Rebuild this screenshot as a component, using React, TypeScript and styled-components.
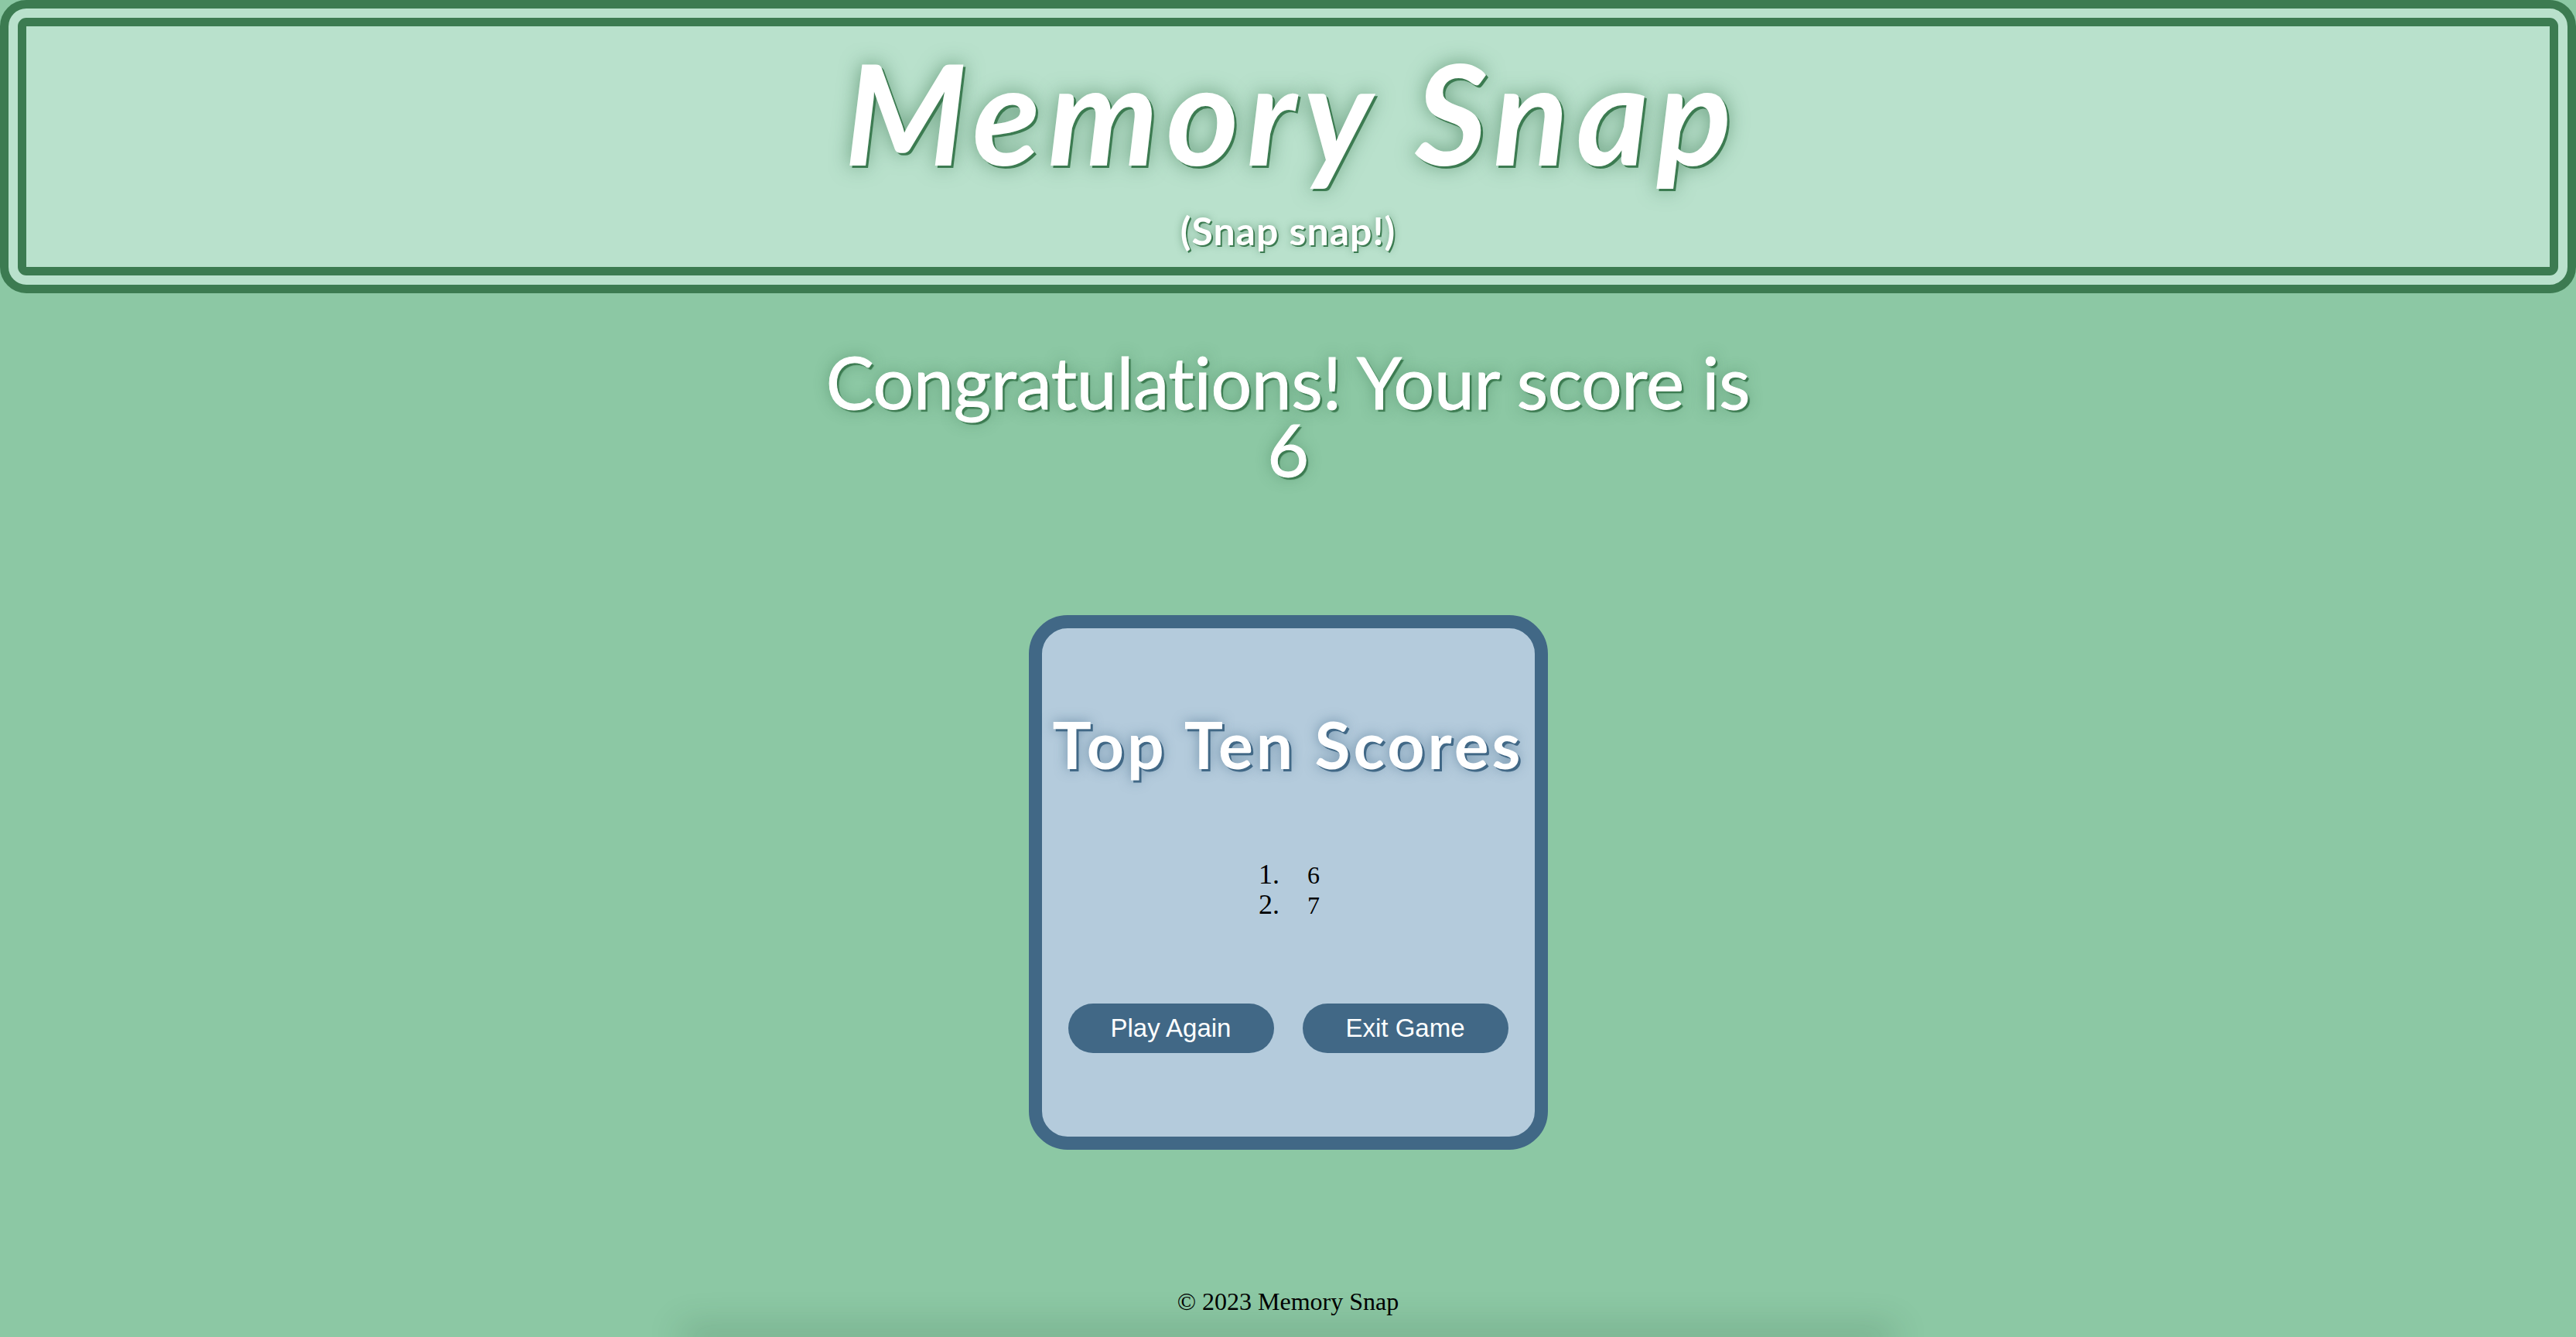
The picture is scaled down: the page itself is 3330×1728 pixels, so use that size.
import React from "react";
import styled, { createGlobalStyle } from "styled-components";

const GlobalStyle = createGlobalStyle`
  html, body {
    margin: 0;
    padding: 0;
    background: #8cc8a4;
  }
  body {
    font-family: "Liberation Serif", "Times New Roman", serif;
  }
  * { box-sizing: border-box; }
`;

const Page = styled.div`
  min-height: 100vh;
  display: flex;
  flex-direction: column;
  align-items: stretch;
  text-align: center;
`;

const Header = styled.header`
  border: 34px double #3c7b51;
  border-radius: 34px;
  background: #b9e1cc;
  padding: 21px 0 22px;
  display: flex;
  flex-direction: column;
  align-items: center;
`;

const Title = styled.h1`
  margin: 0;
  padding-left: 10px;
  font-family: "Comic Sans MS", Lato, "Open Sans", sans-serif;
  font-weight: 700;
  font-style: italic;
  font-size: 180px;
  line-height: 178px;
  letter-spacing: 10px;
  color: #ffffff;
  text-shadow: 3px 3px 0 #3c7b51, 0 0 26px rgba(50, 110, 72, 0.6);
`;

const Subtitle = styled.p`
  margin: 40px 0 0;
  font-family: "Comic Sans MS", Lato, "Open Sans", sans-serif;
  font-weight: 700;
  font-size: 50px;
  line-height: 50px;
  letter-spacing: 1px;
  color: #ffffff;
  text-shadow: 2px 2px 0 #3c7b51, 0 0 10px rgba(50, 110, 72, 0.5);
`;

const Congrats = styled.h2`
  margin: 71px 0 0;
  font-family: "Comic Sans MS", Lato, "Open Sans", sans-serif;
  font-weight: 400;
  font-size: 93px;
  line-height: 87px;
  letter-spacing: -0.3px;
  color: #ffffff;
  -webkit-text-stroke: 1px #ffffff;
  text-shadow: 3px 3px 1px #3c7b51, 0 0 18px rgba(50, 110, 72, 0.5);
`;

const ScoreLine = styled.span`
  display: block;
`;

const Card = styled.section`
  margin: 171px auto 0;
  width: 671px;
  height: 691px;
  border: 17px solid #416886;
  border-radius: 50px;
  background: #b4cbdc;
  display: flex;
  flex-direction: column;
  align-items: center;
  justify-content: space-evenly;
`;

const CardTitle = styled.h3`
  margin: 0;
  font-family: "Comic Sans MS", Lato, "Open Sans", sans-serif;
  font-weight: 700;
  font-size: 84px;
  line-height: 83px;
  letter-spacing: 4px;
  color: #ffffff;
  text-shadow: 3px 3px 0 #416886, 0 0 16px rgba(65, 104, 134, 0.6);
`;

const ScoreList = styled.ol`
  margin: 0;
  padding: 0 0 0 66px;
  text-align: left;
  font-family: "Liberation Serif", "Times New Roman", serif;
  color: #000;
`;

const ScoreItem = styled.li`
  font-size: 32px;
  line-height: 38px;
  &::marker {
    content: counter(list-item) ".\\2003";
    font-size: 36px;
  }
`;

const ButtonRow = styled.div`
  display: flex;
  gap: 37px;
`;

const Button = styled.button`
  height: 64px;
  min-width: 266px;
  padding: 0 40px;
  border: none;
  border-radius: 32px;
  background: #416886;
  color: #ffffff;
  font-family: "Liberation Sans", Arial, sans-serif;
  font-size: 33px;
  cursor: pointer;
`;

const Footer = styled.footer`
  margin-top: auto;
  display: flex;
  flex-direction: column;
  align-items: center;
  padding-bottom: 27px;
`;

const FooterText = styled.p`
  margin: 0;
  font-size: 32px;
  line-height: 37px;
  color: #000;
`;

const Shade = styled.div`
  position: relative;
  top: 27px;
  width: 1540px;
  height: 0;
  border-radius: 40px;
  box-shadow: 0 0 44px 14px rgba(30, 70, 45, 0.22);
`;

const scores = [6, 7];

export default function App() {
  return (
    <>
      <GlobalStyle />
      <Page>
        <Header>
          <Title>Memory Snap</Title>
          <Subtitle>(Snap snap!)</Subtitle>
        </Header>
        <Congrats>
          Congratulations! Your score is
          <ScoreLine>6</ScoreLine>
        </Congrats>
        <Card>
          <CardTitle>Top Ten Scores</CardTitle>
          <ScoreList>
            {scores.map((s, i) => (
              <ScoreItem key={i}>{s}</ScoreItem>
            ))}
          </ScoreList>
          <ButtonRow>
            <Button>Play Again</Button>
            <Button>Exit Game</Button>
          </ButtonRow>
        </Card>
        <Footer>
          <FooterText>© 2023 Memory Snap</FooterText>
          <Shade />
        </Footer>
      </Page>
    </>
  );
}
